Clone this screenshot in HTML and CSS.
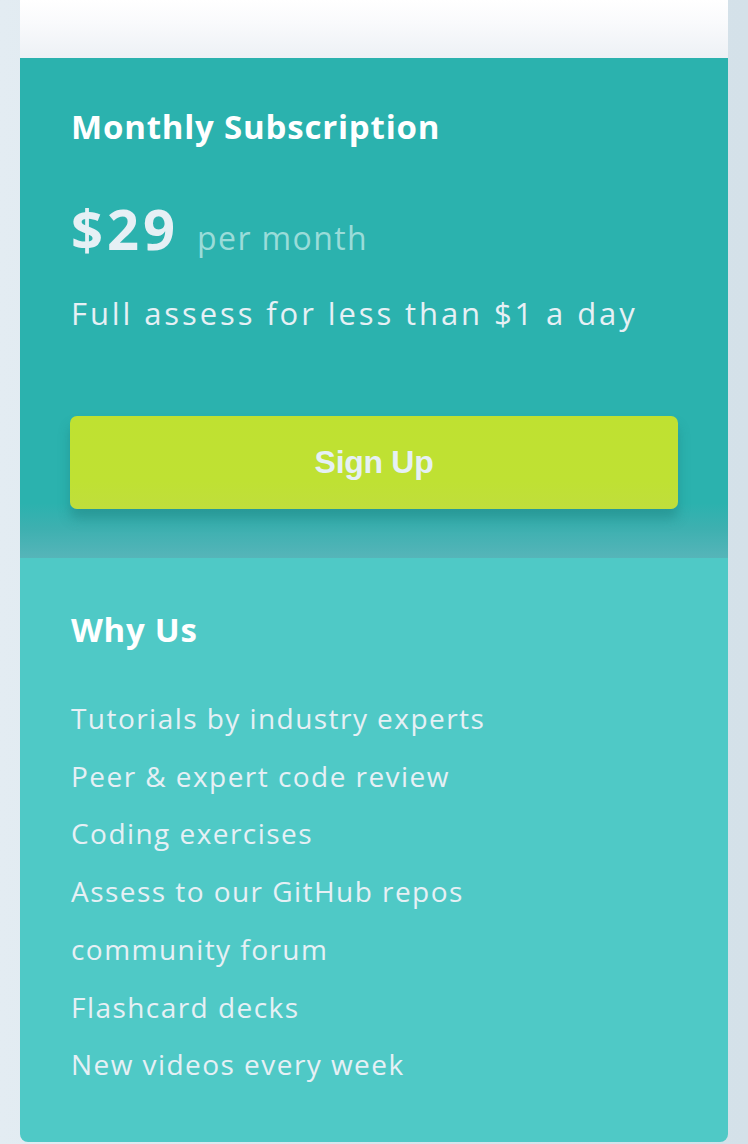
FILE: index.html
```html
<!DOCTYPE html>
<html lang="en">
<head>
<meta charset="utf-8">
<title>Single price grid</title>
<link rel="stylesheet" href="styles.css">
</head>
<body>
<main class="card">
  <div class="card-top"></div>
  <section class="subscription">
    <h2 class="sub-title">Monthly Subscription</h2>
    <div class="price-row">
      <span class="price">$29</span>
      <span class="period">per month</span>
    </div>
    <p class="sub-text">Full assess for less than $1 a day</p>
    <button class="signup" type="button">Sign Up</button>
  </section>
  <section class="why">
    <h2 class="why-title">Why Us</h2>
    <ul class="why-list">
      <li>Tutorials by industry experts</li>
      <li>Peer &amp; expert code review</li>
      <li>Coding exercises</li>
      <li>Assess to our GitHub repos</li>
      <li>community forum</li>
      <li>Flashcard decks</li>
      <li>New videos every week</li>
    </ul>
  </section>
</main>
</body>
</html>
```

FILE: styles.css
```css
* { box-sizing: border-box; }

html, body {
  margin: 0;
  padding: 0;
}

body {
  min-height: 1144px;
  background: linear-gradient(90deg, #e3ecf2 0%, #d9e5ec 50%, #d4e1e9 100%);
  font-family: "Open Sans", "Noto Sans", sans-serif;
  padding: 0 20px;
}

.card {
  display: flex;
  flex-direction: column;
  border-radius: 0 0 8px 8px;
  overflow: hidden;
}

.card-top {
  height: 58px;
  background: linear-gradient(180deg, #ffffff 0%, #f9fafc 40%, #edf1f5 100%);
}

.subscription {
  display: flex;
  flex-direction: column;
  align-items: flex-start;
  padding: 49px 50px 49px 51px;
  background: linear-gradient(180deg, #2bb2ae 0%, #2bb2ae 89%, #3db0b0 94%, #56b5b9 100%);
}

.sub-title {
  margin: 0;
  font-size: 33px;
  line-height: 40px;
  font-weight: 700;
  color: #ffffff;
  letter-spacing: 0.8px;
}

.price-row {
  display: flex;
  align-items: baseline;
  gap: 18px;
  margin-top: 50px;
}

.price {
  font-size: 56px;
  line-height: 62px;
  font-weight: 700;
  color: #e6f0f5;
  letter-spacing: 4px;
}

.period {
  font-size: 32px;
  line-height: 40px;
  color: #9adcd9;
  letter-spacing: 1.4px;
}

.sub-text {
  margin: 34px 0 0;
  font-size: 31px;
  line-height: 40px;
  color: #e6f0f5;
  letter-spacing: 2.9px;
}

.signup {
  margin-top: 83px;
  width: 608px;
  height: 93px;
  margin-left: -1px;
  border: none;
  border-radius: 7px;
  background: linear-gradient(180deg, #bfe131 0%, #bfe133 70%, #c0de3c 100%);
  box-shadow: 0 10px 12px rgba(25, 110, 110, 0.35);
  color: #e6f0f5;
  font-family: "Liberation Sans", Arial, sans-serif;
  font-weight: 700;
  font-size: 32px;
  letter-spacing: -0.3px;
  cursor: pointer;
}

.why {
  display: flex;
  flex-direction: column;
  padding: 52px 50px 48px 51px;
  background: #4fc9c6;
}

.why-title {
  margin: 0;
  font-size: 33px;
  line-height: 40px;
  font-weight: 700;
  color: #ffffff;
  letter-spacing: 0.7px;
}

.why-list {
  list-style: none;
  margin: 40px 0 0;
  padding: 0;
  display: flex;
  flex-direction: column;
}

.why-list li {
  font-size: 28px;
  line-height: 57.7px;
  color: #e6f0f5;
  letter-spacing: 1.45px;
}
```
